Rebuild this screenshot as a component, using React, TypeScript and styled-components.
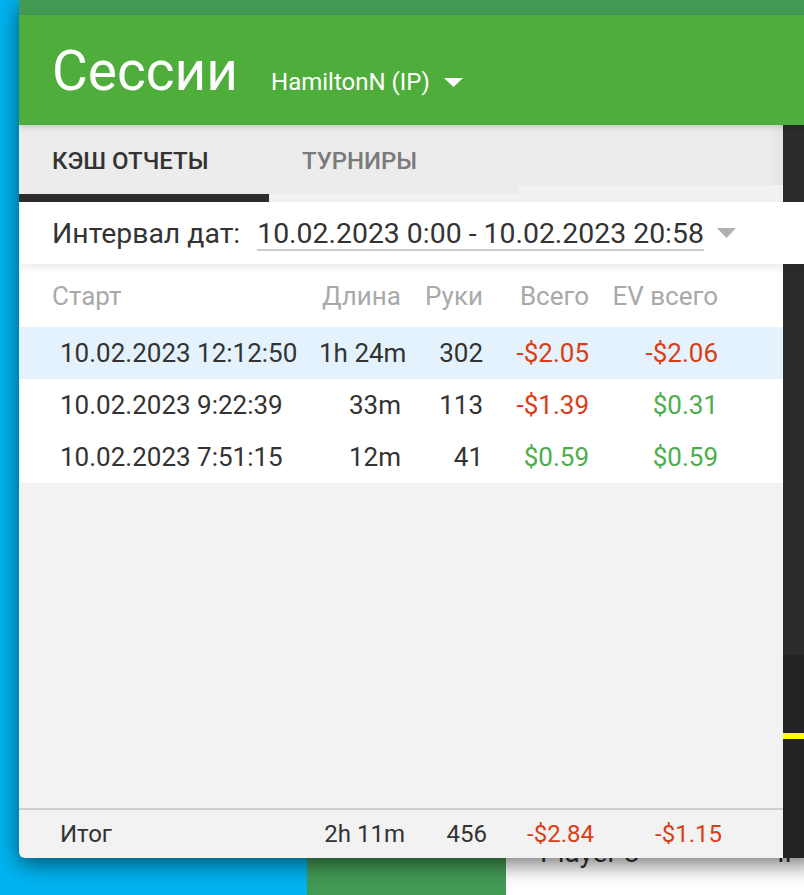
import React from "react";
import styled, { createGlobalStyle } from "styled-components";

const GlobalStyle = createGlobalStyle`
  html, body { margin: 0; padding: 0; }
  body {
    font-family: Roboto, "Noto Sans", "Liberation Sans", sans-serif;
    background: #00b4f0;
    overflow: hidden;
  }
`;

const Page = styled.div`
  position: relative;
  width: 804px;
  height: 895px;
  overflow: hidden;
  background: #00b4f0;
`;

/* ---------- backdrop (other app behind the dialog) ---------- */
const Backdrop = styled.div`
  position: absolute;
  left: 0;
  right: 0;
  top: 858px;
  height: 37px;
  display: flex;
  overflow: hidden;
`;
const BackBlue = styled.div`
  width: 307px;
  background: #00b4f0;
`;
const BackGreen = styled.div`
  width: 199px;
  background: #439a55;
`;
const BackList = styled.div`
  flex: 1;
  background: #ffffff;
  display: flex;
  align-items: flex-start;
  padding-left: 34px;
  overflow: hidden;
  font-size: 28px;
  line-height: 1;
  color: #333;
  white-space: nowrap;
`;
const BackText = styled.span`
  margin-top: -19px;
`;
const BackName = styled(BackText)`
  width: 237px;
`;

/* ---------- the dialog window ---------- */
const Window = styled.div`
  position: absolute;
  left: 19px;
  top: 0;
  width: 800px;
  height: 858px;
  display: flex;
  flex-direction: column;
  background: #f2f2f2;
  border-bottom-left-radius: 6px;
  box-shadow: 0 6px 22px rgba(0, 0, 0, 0.55);
  overflow: hidden;
`;

const StatusBar = styled.div`
  height: 15px;
  background: #439a55;
  flex: none;
`;

const AppBar = styled.div`
  position: relative;
  z-index: 2;
  height: 110px;
  flex: none;
  box-sizing: border-box;
  padding: 29px 0 0 33px;
  display: flex;
  align-items: baseline;
  gap: 33px;
  background: #4fae3b;
  box-shadow: 0 2px 6px rgba(0, 0, 0, 0.16);
  color: #ffffff;
`;

const Title = styled.h1`
  margin: 0;
  font-size: 55px;
  font-weight: 400;
  line-height: 1;
`;

const AccountSelect = styled.div`
  display: flex;
  align-items: baseline;
  gap: 14px;
  font-size: 24px;
  line-height: 1;
  cursor: pointer;
`;

const Caret = ({ color, w, h }: { color: string; w: number; h: number }) => (
  <svg width={w} height={h} viewBox={`0 0 ${w} ${h}`} style={{ display: "block" }}>
    <polygon points={`0,0 ${w},0 ${w / 2},${h}`} fill={color} />
  </svg>
);

const CaretBox = styled.span`
  display: inline-block;
  transform: translateY(-3px);
`;

/* ---------- tabs ---------- */
const TabBar = styled.div`
  flex: none;
  display: flex;
  flex-direction: column;
  background: #f2f2f2;
`;
const TabsRow = styled.div`
  display: flex;
  align-items: flex-start;
`;
const Tab = styled.div<{ $active?: boolean }>`
  width: 250px;
  height: 69px;
  box-sizing: border-box;
  padding-left: 33px;
  padding-top: 2px;
  display: flex;
  align-items: center;
  background: #ececec;
  font-size: 24px;
  font-weight: 500;
  text-transform: uppercase;
  color: ${(p) => (p.$active ? "#333333" : "#7a7a7a")};
`;
const TabFiller = styled.div`
  flex: 1;
  height: 60px;
  background: linear-gradient(to right, #ececec 0, #ececec 249px, #e4e4e4 264px);
`;
const IndicatorTrack = styled.div`
  height: 8px;
`;
const Indicator = styled.div`
  width: 250px;
  height: 8px;
  background: #2d2d2d;
`;

/* ---------- filter ---------- */
const FilterRow = styled.div`
  position: relative;
  z-index: 1;
  flex: none;
  height: 62px;
  box-sizing: border-box;
  padding-left: 33px;
  display: flex;
  align-items: center;
  background: #ffffff;
  box-shadow: 0 3px 9px rgba(0, 0, 0, 0.09);
  color: #333;
  font-size: 28.4px;
`;
const FilterLabel = styled.span`
  margin-right: 17px;
`;
const DateField = styled.span`
  display: inline-flex;
  align-items: center;
  gap: 13px;
  cursor: pointer;
`;
const DateValue = styled.span`
  line-height: 1.12;
  margin-top: 3px;
  border-bottom: 2px solid #cdcdcd;
`;

/* ---------- table ---------- */
const rowCols = "41px 259px 82px 82px 106px 129px 1fr";
const footCols = "41px 263px 82px 82px 107px 128px 1fr";

const Table = styled.div`
  flex: none;
  background: #ffffff;
`;

const GridRow = styled.div<{ $cols: string; $h: number; $bg?: string }>`
  display: grid;
  grid-template-columns: ${(p) => p.$cols};
  align-items: center;
  height: ${(p) => p.$h}px;
  background: ${(p) => p.$bg ?? "transparent"};
  white-space: nowrap;
`;

type Tone = "neg" | "pos" | "muted" | "plain";
const toneColor: Record<Tone, string> = {
  neg: "#db3d14",
  pos: "#4cae4c",
  muted: "#a9a9a9",
  plain: "#333333",
};

const Cell = styled.div<{ $right?: boolean; $tone?: Tone; $size: number; $shift?: number }>`
  text-align: ${(p) => (p.$right ? "right" : "left")};
  color: ${(p) => toneColor[p.$tone ?? "plain"]};
  font-size: ${(p) => p.$size}px;
  margin-left: ${(p) => p.$shift ?? 0}px;
`;

const Spacer = styled.div`
  flex: 1;
`;

const Footer = styled.div`
  flex: none;
  border-top: 2px solid #cecece;
`;

/* ---------- dark side panel (another window on top) ---------- */
const SidePanel = styled.div`
  position: absolute;
  left: 783px;
  top: 47px;
  width: 40px;
  height: 811px;
  display: flex;
  flex-direction: column;
  border-top-left-radius: 10px;
  overflow: hidden;
  background: #2c2c2c;
`;
const SideTop = styled.div`
  height: 608px;
  background: #2c2c2c;
`;
const SideBottom = styled.div`
  flex: 1;
  background: #232323;
  padding-top: 78px;
`;
const YellowLine = styled.div`
  height: 6px;
  background: #ffff00;
`;

const sessions = [
  { start: "10.02.2023 12:12:50", len: "1h 24m", hands: "302", total: "-$2.05", ev: "-$2.06", selected: true },
  { start: "10.02.2023 9:22:39", len: "33m", hands: "113", total: "-$1.39", ev: "$0.31" },
  { start: "10.02.2023 7:51:15", len: "12m", hands: "41", total: "$0.59", ev: "$0.59" },
];

const tone = (v: string): Tone => (v.startsWith("-") ? "neg" : "pos");

export default function App() {
  return (
    <Page>
      <GlobalStyle />
      <Backdrop>
        <BackBlue />
        <BackGreen />
        <BackList>
          <BackName>Player 8</BackName>
          <BackText>IP</BackText>
        </BackList>
      </Backdrop>

      <Window>
        <StatusBar />
        <AppBar>
          <Title>Сессии</Title>
          <AccountSelect>
            <span>HamiltonN (IP)</span>
            <CaretBox>
              <Caret color="#ffffff" w={19} h={9} />
            </CaretBox>
          </AccountSelect>
        </AppBar>

        <TabBar>
          <TabsRow>
            <Tab $active>Кэш отчеты</Tab>
            <Tab>Турниры</Tab>
            <TabFiller />
          </TabsRow>
          <IndicatorTrack>
            <Indicator />
          </IndicatorTrack>
        </TabBar>

        <FilterRow>
          <FilterLabel>Интервал дат:</FilterLabel>
          <DateField>
            <DateValue>10.02.2023 0:00 - 10.02.2023 20:58</DateValue>
            <Caret color="#b0b0b0" w={19} h={10} />
          </DateField>
        </FilterRow>

        <Table>
          <GridRow $cols={rowCols} $h={63} $bg="#ffffff">
            <span />
            <Cell $tone="muted" $size={26} $shift={-8}>Старт</Cell>
            <Cell $tone="muted" $size={26} $right>Длина</Cell>
            <Cell $tone="muted" $size={26} $right>Руки</Cell>
            <Cell $tone="muted" $size={26} $right>Всего</Cell>
            <Cell $tone="muted" $size={26} $right>EV всего</Cell>
          </GridRow>
          {sessions.map((s) => (
            <GridRow key={s.start} $cols={rowCols} $h={52} $bg={s.selected ? "#e3f2fd" : "#ffffff"}>
              <span />
              <Cell $size={26}>{s.start}</Cell>
              <Cell $size={26} $right>{s.len}</Cell>
              <Cell $size={26} $right>{s.hands}</Cell>
              <Cell $size={26} $right $tone={tone(s.total)}>{s.total}</Cell>
              <Cell $size={26} $right $tone={tone(s.ev)}>{s.ev}</Cell>
            </GridRow>
          ))}
        </Table>

        <Spacer />

        <Footer>
          <GridRow $cols={footCols} $h={48}>
            <span />
            <Cell $size={24}>Итог</Cell>
            <Cell $size={24} $right>2h 11m</Cell>
            <Cell $size={24} $right>456</Cell>
            <Cell $size={24} $right $tone="neg">-$2.84</Cell>
            <Cell $size={24} $right $tone="neg">-$1.15</Cell>
          </GridRow>
        </Footer>
      </Window>

      <SidePanel>
        <SideTop />
        <SideBottom>
          <YellowLine />
        </SideBottom>
      </SidePanel>
    </Page>
  );
}
